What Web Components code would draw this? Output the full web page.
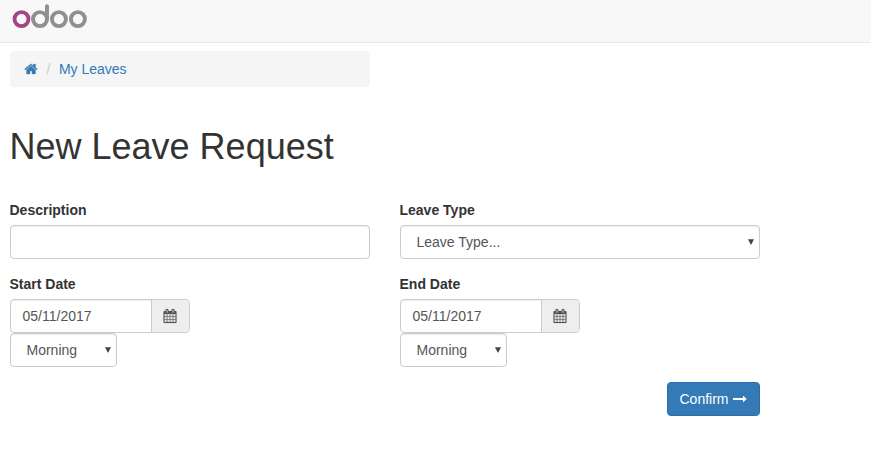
<!DOCTYPE html>
<html lang="en">
<head>
<meta charset="utf-8">
<title>New Leave Request</title>
<style>
body { margin: 0; background: #fff; color: #333; font: 14px/20px "Liberation Sans", Arial, sans-serif; }
</style>
</head>
<body>
<leave-page></leave-page>
<script>
const define = (name, html) => {
  const template = document.createElement("template");
  template.innerHTML = html;
  customElements.define(name, class extends HTMLElement {
    constructor() {
      super();
      this.attachShadow({ mode: "open" }).append(template.content.cloneNode(true));
    }
  });
};

const ICONS = {
  home: "M1472 992v480q0 26-19 45t-45 19h-384v-384h-256v384h-384q-26 0-45-19t-19-45v-480q0-1 .5-3t.5-3l575-474 575 474q1 2 1 6zm223-69l-62 74q-8 9-21 11h-3q-13 0-21-7l-692-577-692 577q-12 8-24 7-13-2-21-11l-62-74q-8-10-7-23.5t11-21.5l719-599q32-26 76-26t76 26l244 204v-195q0-14 9-23t23-9h192q14 0 23 9t9 23v408l219 182q10 8 11 21.5t-7 23.5z",
  calendar: "M192 1664h288v-288h-288v288zm352 0h320v-288h-320v288zm-352-352h288v-320h-288v320zm352 0h320v-320h-320v320zm-352-384h288v-288h-288v288zm736 736h320v-288h-320v288zm-384-736h320v-288h-320v288zm768 736h288v-288h-288v288zm-384-352h320v-320h-320v320zm-352-864v-288q0-13-9.5-22.5t-22.5-9.5h-64q-13 0-22.5 9.5t-9.5 22.5v288q0 13 9.5 22.5t22.5 9.5h64q13 0 22.5-9.5t9.5-22.5zm736 864h288v-320h-288v320zm-384-384h320v-288h-320v288zm384 0h288v-288h-288v288zm32-480v-288q0-13-9.5-22.5t-22.5-9.5h-64q-13 0-22.5 9.5t-9.5 22.5v288q0 13 9.5 22.5t22.5 9.5h64q13 0 22.5-9.5t9.5-22.5zm384-64v1280q0 52-38 90t-90 38h-1408q-52 0-90-38t-38-90v-1280q0-52 38-90t90-38h128v-96q0-66 47-113t113-47h64q66 0 113 47t47 113v96h384v-96q0-66 47-113t113-47h64q66 0 113 47t47 113v96h128q52 0 90 38t38 90z",
  arrow: "M1728 893q0 14-10 24l-384 354q-16 14-35 6-19-9-19-29v-224h-1248q-14 0-23-9t-9-23v-192q0-14 9-23t23-9h1248v-224q0-21 19-29t35 5l384 350q10 10 10 23z"
};
customElements.define("ui-icon", class extends HTMLElement {
  connectedCallback() {
    if (this.shadowRoot) return;
    this.attachShadow({ mode: "open" }).innerHTML = `
      <style>:host { display: block; width: 14px; height: 14px; flex: none; } svg { display: block; overflow: visible; }</style>
      <svg width="14" height="14" viewBox="0 0 1792 1792" fill="currentColor" stroke="currentColor" stroke-width="${this.getAttribute("weight") || 0}"><path d="${ICONS[this.getAttribute("name")]}"/></svg>`;
  }
});

define("brand-logo", `
  <style>:host { display: block; } svg { display: block; }</style>
  <svg width="90" height="32" viewBox="0 0 90 32" fill="none" stroke="#8f8f8f" stroke-width="3.9" stroke-linecap="round" role="img" aria-label="odoo">
    <circle cx="21.5" cy="19.1" r="7" stroke="#a24689"/>
    <circle cx="40" cy="19.1" r="7"/><path d="M47 19.1V6.1"/>
    <circle cx="58.9" cy="19.1" r="7"/><circle cx="77.9" cy="19.1" r="7"/>
  </svg>`);

define("site-header", `
  <style>:host { display: block; box-sizing: border-box; height: 43px; background: #f8f8f8; border-bottom: 1px solid #e7e7e7; }</style>
  <slot></slot>`);

define("bread-crumb", `
  <style>
    :host { display: flex; align-items: center; box-sizing: border-box; width: 360px; height: 36px; padding: 0 14px; background: #f5f5f5; border-radius: 4px; color: #337ab7; }
    .slash { color: #ccc; padding: 0 8.5px; }
  </style>
  <slot name="icon"></slot><span class="slash">/</span><slot></slot>`);

define("form-field", `
  <style>
    :host { display: flex; flex-direction: column; align-items: flex-start; }
    .label { font-weight: bold; margin: 0 0 5px -.5px; }
  </style>
  <div class="label"><slot name="label"></slot></div><slot></slot>`);

const BOX = "box-sizing: border-box; height: 34px; background: #fff; border: 1px solid #ccc; border-radius: 4px; box-shadow: inset 0 1px 1px rgba(0,0,0,.075); color: #555;";

define("text-box", `
  <style>:host { display: block; width: 100%; padding: 6px 12px; ${BOX} }</style>
  <slot></slot>`);

define("select-box", `
  <style>
    :host { display: flex; align-items: center; justify-content: space-between; width: 107px; padding: 0 4px 0 15.5px; ${BOX} }
    :host([wide]) { width: 100%; }
    svg { display: block; }
  </style>
  <span><slot></slot></span>
  <svg width="8" height="8" viewBox="0 0 8 8" fill="#444"><path d="M1 1.2h6L4.3 6.6h-.6z"/></svg>`);

define("date-box", `
  <style>
    :host { display: flex; width: 180px; overflow: hidden; ${BOX} }
    .value { flex: 1; padding: 6px 11.5px; }
    .addon { display: flex; align-items: center; box-sizing: border-box; width: 38px; padding-left: 11px; background: #eee; border-left: 1px solid #ccc; }
  </style>
  <div class="value"><slot></slot></div><div class="addon"><ui-icon name="calendar" weight="20"></ui-icon></div>`);

define("primary-button", `
  <style>:host { display: flex; align-items: center; gap: 4px; box-sizing: border-box; width: 93px; height: 34px; padding: 0 12px 0 11.5px; color: #fff; background: #337ab7; border: 1px solid #2e6da4; border-radius: 4px; }</style>
  <slot></slot><ui-icon name="arrow" weight="10"></ui-icon>`);

define("leave-page", `
  <style>
    :host { display: block; }
    main { width: 750px; padding: 8px 10px 0; }
    h1 { margin: 40px 0 33px -.5px; font-size: 36px; line-height: 40px; font-weight: normal; }
    .grid { display: grid; grid-template-columns: 360px 360px; gap: 15px 30px; }
    .actions { display: flex; justify-content: flex-end; width: 750px; padding-top: 15px; }
  </style>
  <site-header><brand-logo></brand-logo></site-header>
  <main>
    <bread-crumb><ui-icon slot="icon" name="home" weight="40"></ui-icon><span>My Leaves</span></bread-crumb>
    <h1>New Leave Request</h1>
    <div class="grid">
      <form-field><span slot="label">Description</span><text-box></text-box></form-field>
      <form-field><span slot="label">Leave Type</span><select-box wide>Leave Type...</select-box></form-field>
      <form-field><span slot="label">Start Date</span><date-box>05/11/2017</date-box><select-box>Morning</select-box></form-field>
      <form-field><span slot="label">End Date</span><date-box>05/11/2017</date-box><select-box>Morning</select-box></form-field>
    </div>
    <div class="actions"><primary-button><span>Confirm</span></primary-button></div>
  </main>`);
</script>
</body>
</html>
